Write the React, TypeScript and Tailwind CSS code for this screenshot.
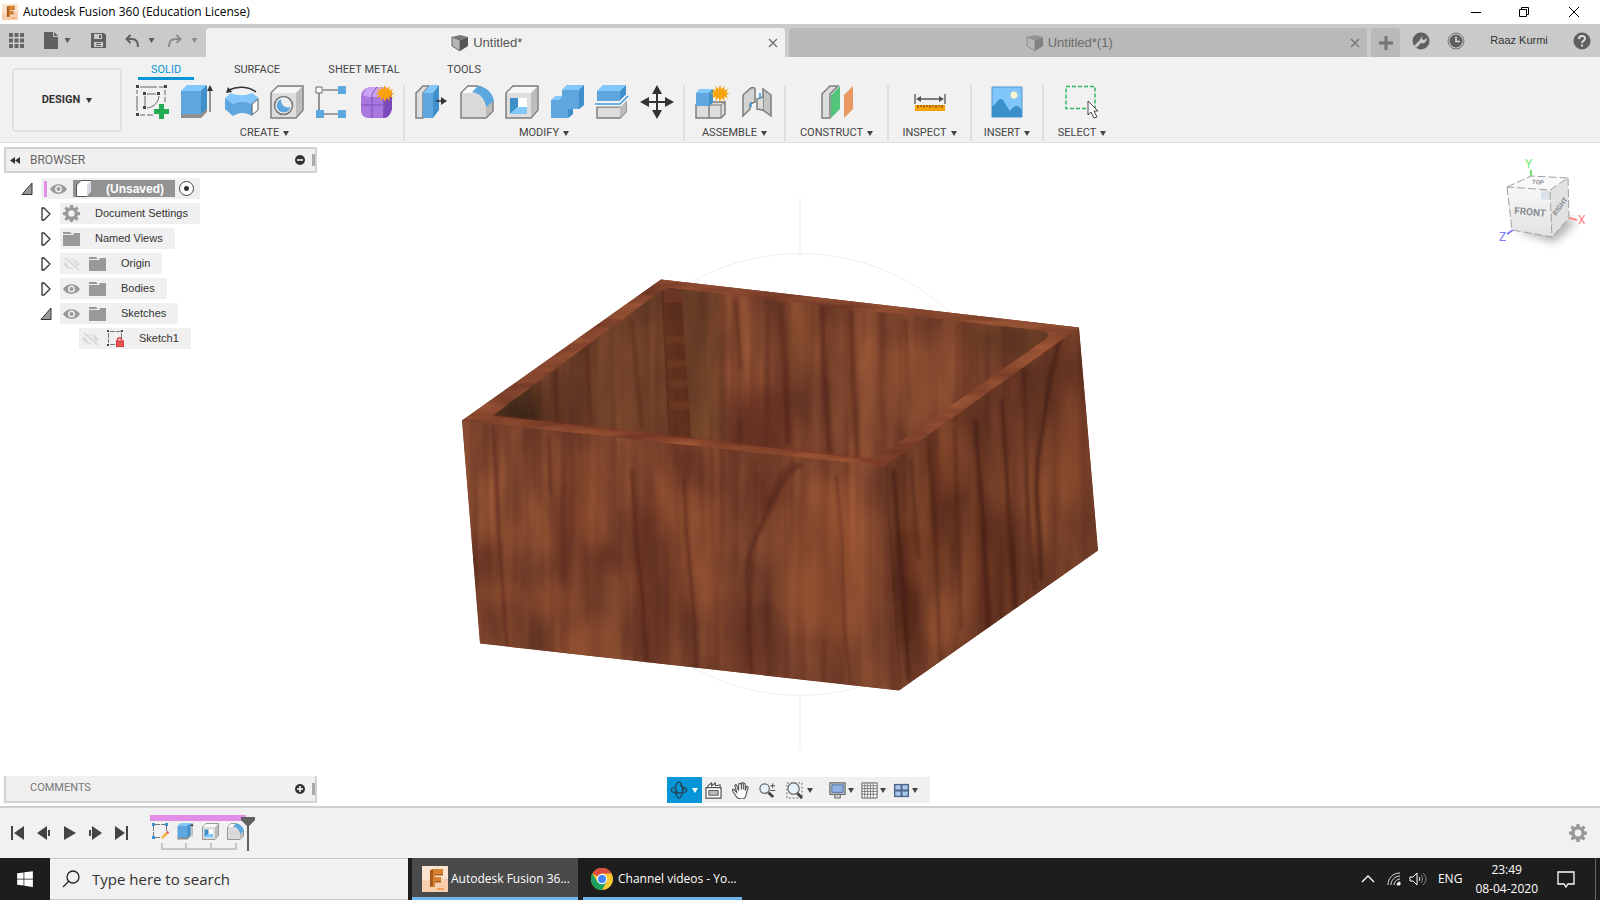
import React from "react";
import { FaWindows } from "react-icons/fa";

const Caret = ({ className = "w-[6px] h-[5px]" }: { className?: string }) => (
  <svg viewBox="0 0 6 5" className={className} fill="currentColor" aria-hidden="true">
    <path d="M0 0h6L3 5z" />
  </svg>
);

const FusionLogo = ({ className }: { className: string }) => (
  <svg viewBox="0 0 26 26" className={className} aria-hidden="true">
    <rect width="26" height="26" fill="#fbe3cf" />
    <path d="M0 14c8 2 16-3 26-1v13H0z" fill="#f8cfae" />
    <path d="M8 4.500 11 3h10v5h-8v3h6v4h-6v6H8z" fill="#d9822f" />
    <path d="M8 4.500 11 3v17l-3 1z" fill="#a65a1c" />
    <path d="M13 8h8v1.500h-8zM13 15h6v1.500h-6z" fill="#a8601f" />
    <path d="M15 22h7v2h-7z" fill="#f0a05c" />
  </svg>
);

const Cube = ({ faded = false }: { faded?: boolean }) => (
  <svg viewBox="0 0 18 18" className="w-[18px] h-[18px]" opacity={faded ? 0.55 : 1} aria-hidden="true">
    <path d="M1 3 9 1l8 2-8 3z" fill="#777" />
    <path d="M1 3l8 3v11l-8-5z" fill="#b4b4b4" stroke="#666" />
    <path d="M17 3 9 6v11l8-5z" fill="#555" />
  </svg>
);

const CloseIcon = () => (
  <svg viewBox="0 0 10 10" className="w-[10px] h-[10px]" stroke="currentColor" strokeWidth="1.500" aria-hidden="true">
    <path d="M1 1l8 8M9 1 1 9" />
  </svg>
);

const Gear = ({ className = "w-[18px] h-[18px]" }: { className?: string }) => (
  <svg viewBox="0 0 18 18" className={className} fill="#999" aria-hidden="true">
    <path
      fillRule="evenodd"
      d="M7.500 0h3l.4 2.600 1.400.6 2.200-1.600 2 2-1.600 2.200.6 1.400 2.500.4v3l-2.500.4-.6 1.400 1.600 2.200-2 2-2.200-1.600-1.400.6-.4 2.400h-3l-.4-2.400-1.400-.6-2.200 1.600-2-2 1.600-2.200-.6-1.400L0 10.600v-3l2.500-.4.6-1.400-1.600-2.200 2-2 2.200 1.600 1.400-.6zM9 5.600a3.400 3.400 0 1 0 0 6.800 3.400 3.400 0 0 0 0-6.800z"
    />
  </svg>
);

const Star = () => (
  <path
    d="M25 0l1.600 4.200L29.500 1l-.3 4.400L33 4l-1.800 3.400L35 8.500l-3.800 1.300L33 13l-3.800-1.400.3 4.400-2.900-3.200L25 17l-1.600-4.200L20.500 16l.3-4.400L17 13l1.800-3.200L15 8.500l3.800-1.100L17 4l3.800 1.400L20.500 1l2.900 3.200z"
    fill="#f9a30a"
  />
);

const gray = "#7d7d7d";

const icons: Record<string, React.ReactNode> = {
  sketch: (
    <>
      <path d="M2 5v4M2 11v15M5 2h17M24 2h5M30 5v5M30 12v5M5 30h5M12 30h6" stroke="#666" />
      <path d="M10 11v10M12 9h9M12 23c7-1 11-5 12-12" stroke="#666" fill="none" />
      <path d="M1 0h3v3H1zM29 0h3v3h-3zM1 28h3v3H1zM8 7h3v3H8zM22 7h3v3h-3zM8 21h3v3H8z" fill="#444" />
      <path d="M24 19h5v5h5v5h-5v5h-5v-5h-5v-5h5z" fill="#22ab4f" />
    </>
  ),
  extrude: (
    <>
      <path d="M1 27h20l6-5v5l-6 6H1z" fill="#8f8f8f" />
      <path d="M1 6v23h20l6-6V1z" fill="#5ea6dd" />
      <path d="M1 6 7 0h20l-6 6z" fill="#83c8fb" />
      <path d="M21 6l6-6v23l-6 6z" fill="#3f8fcb" />
      <path d="M30 4v23" stroke="#333" />
      <path d="M27 6l3-6 3 6z" fill="#333" />
    </>
  ),
  revolve: (
    <>
      <path d="M4 5c8-4 19-4 27 2" fill="none" stroke="#333" strokeWidth="1.500" />
      <path d="M1 8l2-6 4 5z" fill="#333" />
      <path d="M0 13l6-5c7 3 14 3 21 0l7 5-7 6c-5-3-13-3-19 0z" fill="#83c8fb" />
      <path d="M0 13l8 6c6-3 13-3 19 0v12c-6-4-13-4-19 0l-8-7z" fill="#5ea6dd" />
      <path d="M27 19l6-5v11l-6 5z" fill="#fff" stroke="#555" />
    </>
  ),
  hole: (
    <>
      <path d="M1 8 8 1h25v24l-7 8H1z" fill="#ddd" stroke={gray} strokeWidth="1.500" />
      <path d="M2 8 8 2h24l-6 6z" fill="#f6f6f6" />
      <path d="M26 8l6-6v23l-6 7z" fill="#bcbcbc" />
      <circle cx="13.500" cy="20.500" r="9" fill="#eee" stroke="#777" strokeWidth="1.500" />
      <path d="M11 14a7 7 0 1 0 9.500 8c-6 2-10-3-9.500-8z" fill="#5ea6dd" />
    </>
  ),
  pattern: (
    <>
      <path d="M4 8v18M8 5h16M8 29h16" stroke="#555" strokeWidth="1.200" />
      <path d="M1 2h6v6H1z" fill="#fff" stroke="#666" />
      <path d="M23 1h8v8h-8zM1 25h8v8H1zM23 25h8v8h-8z" fill="#5ba8e0" />
    </>
  ),
  form: (
    <>
      <path d="M1 12c0-6 4-9 9-10h14c6 2 8 6 8 12v9c-1 6-4 10-9 10H9c-5 0-8-3-8-8z" fill="#a877e0" />
      <path d="M3 10C5 4 8 2 12 2h12c4 1 5 3 6 5l-5 5H8z" fill="#c9a4f6" />
      <path d="M24 13l8-6v17c-2 6-4 9-9 9z" fill="#7c49bd" />
      <path d="M12 9v24M1 20h23l8-5M24 12v20M12 9l5-7" stroke="#7d51b5" fill="none" />
      <Star />
    </>
  ),
  press: (
    <>
      <path d="M1 8 8 1h6L8 8v25H1z" fill="#ddd" stroke={gray} strokeWidth="1.500" />
      <path d="M8 8l7-8h9l-6 8z" fill="#83c8fb" />
      <path d="M8 8h10v25H8z" fill="#5ea6dd" />
      <path d="M18 8l6-8v25l-6 8z" fill="#3f8fcb" />
      <path d="M21 16h7" stroke="#333" strokeWidth="1.500" />
      <path d="M26 12l6 4-6 4z" fill="#333" />
    </>
  ),
  fillet: (
    <>
      <path d="M1 8 8 1h9c10 2 16 10 16 17v8l-7 7H1z" fill="#dadada" stroke={gray} strokeWidth="1.500" />
      <path d="M2 8l6-6h9l-5 6z" fill="#fafafa" />
      <path d="M26 22l6-5v8l-6 7z" fill="#bbb" />
      <path d="M12 7l6-6c9 1 15 8 16 15l-8 6C25 14 20 8 12 7z" fill="#5ba8e0" />
    </>
  ),
  shell: (
    <>
      <path d="M1 8 8 1h25v24l-7 8H1z" fill="#ddd" stroke={gray} strokeWidth="1.500" />
      <path d="M2 8 8 2h24l-6 6z" fill="#f8f8f8" />
      <path d="M26 8l6-6v23l-6 7z" fill="#bcbcbc" />
      <path d="M5 13h17v16H5z" fill="#fff" />
      <path d="M5 13h8v9l-8 7z" fill="#3d8fca" />
      <path d="M5 29l8-7h9v7z" fill="#83c8fb" />
    </>
  ),
  combine: (
    <>
      <path d="M1 15l5-4h6V5l5-5h17v20l-5 4h-6v5l-5 4H1z" fill="#5ea6dd" />
      <path d="M1 15l5-4h6V5l5-5h17l-5 5H12v7l-3 3z" fill="#83c8fb" />
      <path d="M29 5l5-5v20l-5 4zM18 24h5v5l-5 4z" fill="#3f8fcb" />
    </>
  ),
  split: (
    <>
      <path d="M2 6l6-6h23l-6 6z" fill="#83c8fb" />
      <path d="M2 6h23v10H2z" fill="#5ea6dd" />
      <path d="M25 6l6-6v10l-6 6z" fill="#3f8fcb" />
      <path d="M2 22h23l6-5v10l-6 6H2z" fill="#ddd" stroke={gray} strokeWidth="1.500" />
      <path d="M25 22l6-5v10l-6 6z" fill="#bbb" />
      <path d="M0 19h25l8-8" stroke="#f4f4f4" strokeWidth="5" fill="none" />
      <path d="M0 19h25l8-8" stroke="#3c9ae0" strokeWidth="1.500" fill="none" />
    </>
  ),
  move: (
    <>
      <path d="M17 5v24M5 17h24" stroke="#333" strokeWidth="2" />
      <path d="M17 0l5 9H12zM17 34l5-9H12zM0 17l9-5v10zM34 17l-9-5v10z" fill="#333" />
    </>
  ),
  component: (
    <>
      <path d="M1 20h13v13H1zM14 20l4-3h12v12l-4 4H14z" fill="#ddd" stroke={gray} strokeWidth="1.500" />
      <path d="M14 20h12v13M26 20l4-3" fill="none" stroke={gray} />
      <path d="M1 8l4-4h13v13l-4 4H1z" fill="#5ea6dd" />
      <path d="M1 8l4-4h13l-4 4z" fill="#83c8fb" />
      <path d="M14 8l4-4v13l-4 4z" fill="#3f8fcb" />
      <Star />
    </>
  ),
  joint: (
    <>
      <path d="M3 10 11 3c2-1 4 0 4 1v13l-5 2v5l-7 7z" fill="#d4d4d4" stroke={gray} strokeWidth="1.500" />
      <path d="M31 31l-8-6V11l0-7 8 6z" fill="#c4c4c4" stroke={gray} strokeWidth="1.500" />
      <path d="M23 12l-6 2v10l6 1" fill="#ddd" stroke={gray} strokeWidth="1.500" />
      <path d="M11 17v5M20 8v5" stroke="#3c9ae0" strokeWidth="1.500" />
    </>
  ),
  construct: (
    <>
      <path d="M2 9l8-8h8l-8 8v24H2z" fill="#ddd" stroke={gray} strokeWidth="1.500" />
      <path d="M11 10l9-9v23l-9 9z" fill="#55c47b" />
      <path d="M24 10l9-9v23l-9 9z" fill="#e89860" />
    </>
  ),
  inspect: (
    <>
      <path d="M2 9v10M32 9v10M5 14h24" stroke="#555" strokeWidth="1.300" />
      <path d="M3 14l5-3v6zM31 14l-5-3v6z" fill="#555" />
      <path d="M2 20h30v6H2z" fill="#f9a30a" />
      <path d="M5 20v3M8 20v2M11 20v3M14 20v2M17 20v3M20 20v2M23 20v3M26 20v2M29 20v3" stroke="#5d4310" />
    </>
  ),
  insert: (
    <>
      <path d="M2 2h30v30H2z" fill="#80c6fa" stroke="#4e96cc" />
      <circle cx="24" cy="10" r="3.500" fill="#fdf7cf" />
      <path d="M2 22c4-3 6-8 9-8s6 9 9 12c3-4 5-5 7-5s3 2 5 4v7H2z" fill="#3b8fca" />
    </>
  ),
  select: (
    <>
      <path d="M1 1.500h29v22H1z" fill="none" stroke="#2fb860" strokeWidth="1.500" strokeDasharray="4 2" />
      <path d="M23 16v14l3-3 3 6 3-1-3-6h4z" fill="#fff" stroke="#444" />
    </>
  ),
};

const ToolIcon = ({ name, className = "w-[34px] h-[34px]" }: { name: string; className?: string }) => (
  <svg viewBox="0 0 34 34" className={className} fill="none" aria-hidden="true">
    {icons[name]}
  </svg>
);

const groups = [
  { label: "CREATE", width: "w-[275px] pr-1", tools: ["sketch", "extrude", "revolve", "hole", "pattern", "form"] },
  { label: "MODIFY", width: "w-[280px]", tools: ["press", "fillet", "shell", "combine", "split", "move"] },
  { label: "ASSEMBLE", width: "w-[101px]", tools: ["component", "joint"] },
  { label: "CONSTRUCT", width: "w-[103px]", tools: ["construct"] },
  { label: "INSPECT", width: "w-[83px]", tools: ["inspect"] },
  { label: "INSERT", width: "w-[72px]", tools: ["insert"] },
  { label: "SELECT", width: "w-[76px]", tools: ["select"] },
];

const ribbonTabs = [
  { label: "SOLID", width: "w-[56px]", active: true },
  { label: "SURFACE", width: "w-[56px]" },
  { label: "SHEET METAL", width: "w-[88px]" },
  { label: "TOOLS", width: "w-[42px]" },
];

const TitleBar = () => (
  <header className="flex h-6 shrink-0 items-center justify-between bg-white pl-[2px] font-['Open_Sans','Noto_Sans',sans-serif] text-black">
    <div className="flex items-center gap-[5px]">
      <FusionLogo className="w-4 h-4" />
      <h1 className="text-[12px]">Autodesk Fusion 360 (Education License)</h1>
    </div>
    <div className="flex items-center">
      <button aria-label="Minimize" className="flex w-[48px] justify-center">
        <svg viewBox="0 0 12 12" className="w-3 h-3" stroke="#000"><path d="M1 6.500h10" /></svg>
      </button>
      <button aria-label="Restore" className="flex w-[48px] justify-center">
        <svg viewBox="0 0 12 12" className="w-3 h-3" stroke="#000" fill="none">
          <path d="M1.500 3.500h7v7h-7zM3.500 3V1.500h7v7H9" />
        </svg>
      </button>
      <button aria-label="Close" className="flex w-[52px] justify-center">
        <svg viewBox="0 0 12 12" className="w-3 h-3" stroke="#000"><path d="M1 1l10 10M11 1 1 11" /></svg>
      </button>
    </div>
  </header>
);

const DocumentBar = () => (
  <div className="flex h-[33px] shrink-0 items-end bg-[#cacaca] text-[#5a5a5a]">
    <div className="flex h-[33px] w-[206px] items-center pl-[9px]">
      <button aria-label="Data panel">
        <svg viewBox="0 0 15 15" className="w-[15px] h-[15px]" fill="#666">
          <path d="M0 0h4v4H0zM5.500 0h4v4h-4zM11 0h4v4h-4zM0 5.500h4v4H0zM5.500 5.500h4v4h-4zM11 5.500h4v4h-4zM0 11h4v4H0zM5.500 11h4v4h-4zM11 11h4v4h-4z" />
        </svg>
      </button>
      <button aria-label="File" className="ml-5 flex items-center gap-[6px]">
        <svg viewBox="0 0 14 17" className="w-[14px] h-[17px]" fill="#606060">
          <path d="M0 0h9v5h5v12H0zM10 0l4 4h-4z" />
        </svg>
        <Caret className="w-[7px] h-[5px]" />
      </button>
      <button aria-label="Save" className="ml-5">
        <svg viewBox="0 0 15 15" className="w-[15px] h-[15px]">
          <path d="M0 0h13l2 2v13H0z" fill="#606060" />
          <path d="M3 1h8v5H3zM3 9h9v5H3z" fill="#cacaca" />
          <path d="M8 2h2v3H8zM5 10h5v1H5zM5 12h5v1H5z" fill="#606060" />
        </svg>
      </button>
      <button aria-label="Undo" className="ml-[19px] flex items-center gap-[9px]">
        <svg viewBox="0 0 14 13" className="w-[14px] h-[13px]" fill="none" stroke="#606060" strokeWidth="2">
          <path d="M5.500 1 1.500 5l4 4M2 5h5c4 0 6 3 6 8" />
        </svg>
        <Caret className="w-[7px] h-[5px]" />
      </button>
      <button aria-label="Redo" className="ml-[13px] flex items-center gap-[9px] text-[#8d8d8d]">
        <svg viewBox="0 0 14 13" className="w-[14px] h-[13px]" fill="none" stroke="currentColor" strokeWidth="2">
          <path d="M8.500 1l4 4-4 4M12 5H7c-4 0-6 3-6 8" />
        </svg>
        <Caret className="w-[7px] h-[5px]" />
      </button>
    </div>
    <div className="flex h-[29px] flex-1 items-center rounded-t bg-[#f1f1f1] pr-[7px]">
      <button className="flex flex-1 items-center justify-center gap-1 text-[13px] text-[#555]">
        <Cube />
        Untitled*
      </button>
      <button aria-label="Close Untitled*" className="text-[#777]"><CloseIcon /></button>
    </div>
    <div className="ml-1 flex h-[29px] flex-1 items-center rounded-t bg-[#b9b9b9] pr-[7px]">
      <button className="flex flex-1 items-center justify-center gap-1 text-[13px] text-[#6c6c6c]">
        <Cube faded />
        Untitled*(1)
      </button>
      <button aria-label="Close Untitled*(1)" className="text-[#777]"><CloseIcon /></button>
    </div>
    <button aria-label="New tab" className="ml-1 flex h-[29px] w-[29px] items-center justify-center rounded-t bg-[#b9b9b9]">
      <svg viewBox="0 0 14 14" className="w-[14px] h-[14px]" stroke="#757575" strokeWidth="3"><path d="M7 0v14M0 7h14" /></svg>
    </button>
    <div className="flex h-[33px] w-[200px] items-center justify-between pl-3 pr-[9px]">
      <button aria-label="Extensions">
        <svg viewBox="0 0 18 18" className="w-[18px] h-[18px]">
          <circle cx="9" cy="9" r="8.500" fill="#5f5f5f" />
          <path d="M3 15l6-6" stroke="#cacaca" strokeWidth="3" />
          <path d="M13 4l-3 1 0 2 2 1 3-2c0 4-3 6-6 5-2-2-1-7 4-7z" fill="#cacaca" />
        </svg>
      </button>
      <button aria-label="Job status">
        <svg viewBox="0 0 18 18" className="w-[18px] h-[18px]" fill="none">
          <circle cx="9" cy="9" r="8" stroke="#777" />
          <circle cx="9" cy="9" r="6.500" fill="#5f5f5f" />
          <path d="M9 4.500V9.500h4" stroke="#ddd" strokeWidth="1.500" />
        </svg>
      </button>
      <button className="mx-2 text-[11px] text-[#333]">Raaz Kurmi</button>
      <button aria-label="Help">
        <svg viewBox="0 0 18 18" className="w-[18px] h-[18px]" fill="none">
          <circle cx="9" cy="9" r="8.500" fill="#5f5f5f" />
          <path d="M6 7c0-4 6-4 6-.5 0 2.500-3 2-3 4.500" stroke="#ddd" strokeWidth="2" />
          <path d="M8 12.500h2v2H8z" fill="#ddd" />
        </svg>
      </button>
    </div>
  </div>
);

const Ribbon = () => (
  <div className="flex h-[86px] shrink-0 border-b border-[#dcdcdc] bg-[#f1f1f1] font-[Roboto,'Liberation_Sans',sans-serif] text-[11px] text-[#444]">
    <div className="w-[130px] shrink-0 pl-3 pt-[11px]">
      <button className="flex h-[64px] w-[110px] items-center justify-center gap-[6px] rounded border-2 border-[#e0e0e0] font-bold text-[#333]">
        DESIGN
        <Caret />
      </button>
    </div>
    <div className="flex flex-col">
      <nav className="flex h-[23px] gap-[35px] pl-2">
        {ribbonTabs.map((tab) => (
          <button
            key={tab.label}
            className={
              tab.active
                ? `${tab.width} h-[23px] border-b-[3px] border-[#0696d7] pt-[6px] leading-[14px] text-[#0696d7]`
                : `${tab.width} h-[23px] border-b-[3px] border-transparent pt-[6px] leading-[14px]`
            }
          >
            {tab.label}
          </button>
        ))}
      </nav>
      <div className="mt-[5px] flex h-[56px]">
        {groups.map((group) => (
          <section
            key={group.label}
            className={`${group.width} flex flex-col items-center justify-between border-r-2 border-[#dfdfdf] last:border-r-0`}
          >
            <div className="flex gap-[11px]">
              {group.tools.map((tool) => (
                <button key={tool} aria-label={tool}><ToolIcon name={tool} /></button>
              ))}
            </div>
            <button className="flex items-center gap-1 leading-4">
              {group.label}
              <Caret />
            </button>
          </section>
        ))}
      </div>
    </div>
  </div>
);

const Eye = ({ hidden = false }: { hidden?: boolean }) => (
  <svg viewBox="0 0 17 14" className="w-[17px] h-[14px]" fill="none" aria-hidden="true">
    <path d="M0 7c4-6.500 13-6.500 17 0-4 6.500-13 6.500-17 0z" fill={hidden ? "#dcdcdc" : "#999"} />
    <circle cx="8.500" cy="7" r="3.500" fill="#f0f0f0" />
    <circle cx="8.500" cy="7" r="2" fill={hidden ? "#dcdcdc" : "#999"} />
    {hidden && <path d="M1 1l14 12" stroke="#f0f0f0" strokeWidth="4" />}
    {hidden && <path d="M2 1l14 12" stroke="#d4d4d4" strokeWidth="1.500" />}
  </svg>
);

const Folder = () => (
  <svg viewBox="0 0 17 14" className="w-[17px] h-[14px]" fill="#999" aria-hidden="true">
    <path d="M0 0h7l2 2H0zM0 3h10l1-2h6v13H0z" />
  </svg>
);

const SketchLock = () => (
  <svg viewBox="0 0 17 17" className="w-[17px] h-[17px]" fill="none" aria-hidden="true">
    <path d="M1.500 3v10M3 1.500h11M14.500 3v6M3 14.500h6" stroke="#777" strokeDasharray="5 1" />
    <path d="M0 0h2v2H0zM14 0h2v2h-2zM0 14h2v2H0z" fill="#444" />
    <path d="M10.500 11V9.500c0-2 4-2 4 0V11" stroke="#d93a3a" strokeWidth="1.500" />
    <path d="M9 10.500h8V17H9z" fill="#d93a3a" />
    <path d="M10 13h6M10 15h6" stroke="#f7a0a0" strokeWidth=".6" />
  </svg>
);

const Expander = ({ open }: { open: boolean }) => (
  <button aria-label={open ? "Collapse" : "Expand"} className="flex w-3 justify-center">
    <svg viewBox="0 0 12 14" className="w-[12px] h-[14px]" stroke="#333" strokeLinejoin="round">
      {open ? <path d="M11 1v11.500H1z" fill="#999" /> : <path d="M2 1h2l6 6-6 6H2z" fill="#fafafa" strokeWidth="1.300" />}
    </svg>
  </button>
);

const treeRows = [
  { label: "Document Settings", open: false, icon: "gear" },
  { label: "Named Views", open: false, icon: "folder" },
  { label: "Origin", open: false, icon: "folder", eye: "off" },
  { label: "Bodies", open: false, icon: "folder", eye: "on" },
  { label: "Sketches", open: true, icon: "folder", eye: "on" },
];

const PanelGrip = () => <span className="ml-[7px] h-3 w-[3px] border-l-2 border-r border-[#aaa]" />;

const Browser = () => (
  <aside className="relative w-[320px] pl-1 pt-1 text-[11px] text-[#333]">
    <div className="flex h-[26px] w-[313px] items-center border-2 border-[#d2d2d2] bg-[#f0f0f0] pl-1">
      <button aria-label="Collapse browser">
        <svg viewBox="0 0 10 7" className="w-[10px] h-[7px]" fill="#333"><path d="M5 0v7L0 3.500zM10 0v7L5 3.500z" /></svg>
      </button>
      <h2 className="ml-[10px] flex-1 font-[Roboto,'Liberation_Sans',sans-serif] text-[12px] text-[#666]">BROWSER</h2>
      <button aria-label="Hide browser">
        <svg viewBox="0 0 10 10" className="w-[10px] h-[10px]"><circle cx="5" cy="5" r="5" fill="#333" /><path d="M2 5h6" stroke="#fff" strokeWidth="1.500" /></svg>
      </button>
      <PanelGrip />
    </div>
    <ul className="mt-[5px] flex flex-col gap-1">
      <li className="flex h-[21px] items-center gap-2 pl-[17px]">
        <Expander open />
        <div className="flex h-[21px] w-[159px] items-center bg-[#f0f0f0] pl-[3px]">
          <span className="h-4 w-[3px] bg-[#e08ee6]" />
          <button aria-label="Toggle root" className="ml-[3px]"><Eye /></button>
          <button className="ml-[6px] flex h-[17px] w-[102px] items-center bg-[#939393] pl-[3px] text-[12px] font-bold text-white">
            <svg viewBox="0 0 16 17" className="w-4 h-[17px]" stroke="#555">
              <path d="M.5 5 5 .5h10.500v11L11 16.500H.5z" fill="#fff" />
              <path d="M11 5l4.500-4.500v11L11 16.500z" fill="#d5d9df" stroke="none" />
            </svg>
            <span className="ml-[14px]">(Unsaved)</span>
          </button>
          <input type="radio" defaultChecked aria-label="Activate component" className="ml-1 h-[15px] w-[15px] appearance-none rounded-full border border-[#444] bg-[radial-gradient(circle,#333_0_2px,#fff_3px)]" />
        </div>
      </li>
      {treeRows.map((row) => (
        <li key={row.label} className="flex h-[21px] items-center gap-2 pl-9">
          <Expander open={row.open} />
          <div className="flex h-[21px] items-center bg-[#f0f0f0] pl-[3px] pr-3">
            {row.eye && <button aria-label={`Toggle ${row.label}`} className="mr-[9px]"><Eye hidden={row.eye === "off"} /></button>}
            {row.icon === "gear" ? <Gear className="w-[17px] h-[17px]" /> : <Folder />}
            <span className="ml-[15px]">{row.label}</span>
          </div>
        </li>
      ))}
      <li className="flex h-[21px] items-center pl-[75px]">
        <div className="flex h-[21px] items-center bg-[#f0f0f0] pl-[3px] pr-3">
          <button aria-label="Toggle Sketch1" className="mr-2"><Eye hidden /></button>
          <SketchLock />
          <span className="ml-[15px]">Sketch1</span>
        </div>
      </li>
    </ul>
  </aside>
);

const FRONT = "462,421 884,467 899,691 480,644";
const SIDE = "884,467 1079,328 1098,551 899,691";
const RIM = "661,280 1079,328 884,467 462,421";

const WoodBox = () => (
  <svg
    viewBox="0 143 1600 664"
    preserveAspectRatio="xMidYMid slice"
    className="absolute inset-0 h-full w-full"
    role="img"
    aria-label="Wooden box model"
  >
    <defs>
      <filter id="wood" x="0" y="0" width="1" height="1" colorInterpolationFilters="sRGB">
        <feTurbulence type="fractalNoise" baseFrequency="0.025 0.009" numOctaves="3" seed="8" result="n" />
        <feColorMatrix in="n" values=".32 0 0 0 .335  .2 0 0 0 .175  .1 0 0 0 .13  0 0 0 0 1" result="base" />
        <feTurbulence type="fractalNoise" baseFrequency="0.1 0.004" numOctaves="2" seed="21" />
        <feColorMatrix values="0 0 0 0 .32  0 0 0 0 .14  0 0 0 0 .1  .9 0 0 0 -.34" result="grain" />
        <feMerge result="m">
          <feMergeNode in="base" />
          <feMergeNode in="grain" />
        </feMerge>
        <feComposite in="m" in2="SourceGraphic" operator="in" />
      </filter>
      <filter id="rimWood" x="0" y="0" width="1" height="1" colorInterpolationFilters="sRGB">
        <feTurbulence type="fractalNoise" baseFrequency="0.015 0.1" numOctaves="2" seed="4" />
        <feColorMatrix values=".32 0 0 0 .37  .22 0 0 0 .17  .12 0 0 0 .12  0 0 0 0 1" />
        <feComposite in2="SourceGraphic" operator="in" />
      </filter>
      <filter id="soft" x="-50%" y="-20%" width="200%" height="140%">
        <feGaussianBlur stdDeviation="2" />
      </filter>
      <filter id="softer" x="-100%" y="-50%" width="300%" height="200%">
        <feGaussianBlur stdDeviation="9" />
      </filter>
      <filter id="line" x="400" y="200" width="800" height="560" filterUnits="userSpaceOnUse">
        <feGaussianBlur stdDeviation="1.500" />
      </filter>
      <clipPath id="frontClip"><polygon points={FRONT} /></clipPath>
      <clipPath id="sideClip"><polygon points={SIDE} /></clipPath>
      <clipPath id="innerClip">
        <path d="M493 416 660 292Q666 288 674 289L1040 331Q1052 333 1046 339L878 458 862 459z" />
      </clipPath>
    </defs>

    <g fill="none" stroke="#efefef">
      <circle cx="800" cy="475" r="221" />
      <path d="M800 198v56M800 696v55" />
    </g>

    <path d="M661 280 1079 328 1098 551 899 691 480 644 462 421z" fill="#7a3f28" />
    <polygon points={RIM} fill="#8a4a30" filter="url(#rimWood)" />

    <g clipPath="url(#innerClip)">
      <rect x="480" y="280" width="600" height="190" fill="#7a432c" filter="url(#wood)" />
      <path d="M480 280h183l9 190H480z" fill="#40301a" opacity=".22" />
      <path d="M661 285h20l12 180h-23z" fill="#4a2414" opacity=".5" />
      <path d="M663 287h19l1 16h-19z" fill="#6e3824" opacity=".8" />
      <path d="M666 340h20M668 364h20M670 384h20M671 406h22" stroke="#7f4526" strokeWidth="8" opacity=".4" filter="url(#line)" />
      <path d="M681 285h24l8 180h-20z" fill="#5c4426" opacity=".3" />
      <path d="M703 285h16l8 180h-14z" fill="#5c4426" opacity=".2" filter="url(#soft)" />
      <path d="M485 425l40-50 24 74z" fill="#1e1408" opacity=".6" filter="url(#softer)" />
      <g stroke="#4a1f17" fill="none" opacity=".45" filter="url(#line)">
        <path d="M780 305l5 60 3 80M822 308l2 60 6 90M851 310l2 60 4 90M554 365l4 60" strokeWidth="5" />
        <path d="M735 300l6 70M905 320l5 90M740 420v40M632 320l10 110M586 345l6 80" strokeWidth="3" />
      </g>
      <ellipse cx="765" cy="425" rx="24" ry="38" fill="#4d1f18" opacity=".5" filter="url(#softer)" />
      <ellipse cx="915" cy="385" rx="34" ry="45" fill="#a8623a" opacity=".4" filter="url(#softer)" />
      <ellipse cx="800" cy="340" rx="12" ry="45" fill="#9a5a30" opacity=".4" filter="url(#softer)" />
      <ellipse cx="1015" cy="340" rx="50" ry="16" fill="#4d331a" opacity=".5" filter="url(#softer)" />
    </g>
    <path d="M493 417 862 459 884 467" fill="none" stroke="#7a3522" strokeWidth="3" opacity=".6" filter="url(#line)" />

    <g clipPath="url(#frontClip)">
      <polygon points={FRONT} fill="#7a432c" filter="url(#wood)" />
      <g fill="#471b15" opacity=".4" filter="url(#softer)">
        <ellipse cx="567" cy="520" rx="14" ry="50" />
        <ellipse cx="485" cy="560" rx="14" ry="14" />
        <ellipse cx="655" cy="590" rx="18" ry="90" />
        <ellipse cx="690" cy="470" rx="16" ry="26" />
        <ellipse cx="610" cy="560" rx="20" ry="14" />
        <ellipse cx="765" cy="495" rx="10" ry="30" />
        <ellipse cx="745" cy="650" rx="18" ry="50" />
      </g>
      <g fill="#a65c34" opacity=".42" filter="url(#softer)">
        <ellipse cx="593" cy="500" rx="12" ry="50" />
        <ellipse cx="550" cy="600" rx="28" ry="22" />
        <ellipse cx="585" cy="645" rx="26" ry="24" />
        <ellipse cx="830" cy="560" rx="44" ry="80" />
        <ellipse cx="700" cy="560" rx="14" ry="60" />
        <ellipse cx="495" cy="595" rx="26" ry="12" />
        <ellipse cx="510" cy="535" rx="14" ry="12" />
        <ellipse cx="665" cy="500" rx="8" ry="36" />
      </g>
      <g stroke="#3f1813" fill="none" opacity=".42" filter="url(#line)">
        <path d="M802 464c-18 10-28 32-38 56-10 22-18 36-17 62 2 30 0 60 6 100" strokeWidth="4" />
        <path d="M796 464c-12 8-20 26-28 46" strokeWidth="9" opacity=".6" />
        <path d="M632 470l4 70 7 60 4 70M684 480l3 60 6 60 4 80M493 425l6 110 8 115" strokeWidth="3" />
        <path d="M836 475l6 60 2 90 8 70M548 435l3 60M752 560l-2 60" strokeWidth="3" opacity=".8" />
      </g>
    </g>

    <g clipPath="url(#sideClip)">
      <polygon points={SIDE} fill="#7a432c" filter="url(#wood)" />
      <polygon points={SIDE} fill="#3a1a0c" opacity=".16" />
      <g fill="#3c1510" opacity=".45" filter="url(#softer)">
        <ellipse cx="940" cy="505" rx="9" ry="55" />
        <ellipse cx="902" cy="580" rx="8" ry="60" />
        <ellipse cx="990" cy="570" rx="12" ry="70" />
      </g>
      <g fill="#a65c34" opacity=".42" filter="url(#softer)">
        <ellipse cx="920" cy="570" rx="10" ry="24" />
        <ellipse cx="955" cy="460" rx="10" ry="36" />
        <ellipse cx="940" cy="620" rx="14" ry="30" />
        <ellipse cx="1070" cy="450" rx="14" ry="70" />
      </g>
      <g stroke="#34120e" fill="none" opacity=".48" filter="url(#line)">
        <path d="M1060 340c-6 20-12 46-16 80-2 20-9 40-7 80 2 30 4 40 4 80" strokeWidth="4" />
        <path d="M975 420l8 100 6 110M1002 400l6 100 8 110M893 470l10 120 6 90" strokeWidth="4" />
        <path d="M928 440l8 100 4 120M955 430l6 200M1024 370l2 110 8 110M911 460l8 100" strokeWidth="2" />
      </g>
    </g>
  </svg>
);

const ViewCube = () => (
  <svg viewBox="1490 150 110 104" className="absolute right-0 top-2 h-[104px] w-[110px]" role="img" aria-label="View cube">
    <defs>
      <filter id="cubeShadow" x="-40%" y="-40%" width="180%" height="180%"><feGaussianBlur stdDeviation="4" /></filter>
      <linearGradient id="cubeFace" x1="0" y1="0" x2="0" y2="1">
        <stop offset="0" stopColor="#f7f7f7" />
        <stop offset="1" stopColor="#e2e2e2" />
      </linearGradient>
    </defs>
    <path d="M1518 230l36 12 22-20-20-12z" fill="#999" opacity=".7" filter="url(#cubeShadow)" />
    <path d="M1531 175v-6" stroke="#6fee6f" strokeWidth="2" />
    <path d="M1569 217l8 2" stroke="#ff8a8a" strokeWidth="2" />
    <path d="M1513 229l-6 4" stroke="#7b7bff" strokeWidth="2" />
    <path d="M1507 186l24-11 37 2-18 12z" fill="#f8f8f8" />
    <path d="M1507 186l43 3 2 47-40-7z" fill="url(#cubeFace)" />
    <path d="M1550 189l18-12 1 40-17 19z" fill="#e2e2e2" />
    <path d="M1541 189l9 1v9l-9-1z" fill="#dbe1e8" />
    <path d="M1507 186l24-11 37 2-18 12zM1507 186l5 43 40 7-2-47M1568 177l1 40-17 19" fill="none" stroke="#a0a0a0" strokeDasharray="8 3" />
    <g fontFamily="Roboto, Liberation Sans, sans-serif" fontWeight="bold" fill="#8b9096">
      <text fontSize="10" transform="translate(1514 213) rotate(5)">FRONT</text>
      <text fontSize="7" transform="translate(1556 215) rotate(-54)">RIGHT</text>
      <text fontSize="6" transform="translate(1532 183) rotate(3)">TOP</text>
    </g>
    <g fontFamily="Roboto, Liberation Sans, sans-serif" fontSize="12">
      <text x="1525" y="167" fill="#6fee6f">Y</text>
      <text x="1578" y="223" fill="#ff8080">X</text>
      <text x="1499" y="240" fill="#7b7bff">Z</text>
    </g>
  </svg>
);

const navTools = [
  {
    label: "Look at",
    icon: (
      <>
        <path d="M3 6V4l4-3v3l4-3v3l5-1v3" fill="#fff" stroke="#555" strokeWidth="1.200" />
        <path d="M1 6h16v11H1z" fill="#fff" stroke="#555" strokeWidth="1.300" />
        <path d="M4 9h10v5H4z" fill="#bbb" stroke="#555" />
      </>
    ),
  },
  {
    label: "Pan",
    icon: (
      <path
        d="M5 11 2 8C1 7 0 8 1 10l4 6c1 1 2 2 5 2 4 0 5-2 5-5l2-7c0-2-2-2-2 0l-1 3V3c0-2-2-2-2 0v5-6c0-2-2-2-2 0v6-5C9 1 7 1 7 3v6L5 4C4 2 3 3 3 4z"
        fill="#fff"
        stroke="#555"
        strokeWidth="1.200"
      />
    ),
  },
  {
    label: "Zoom",
    icon: (
      <>
        <circle cx="6" cy="7" r="5" fill="#e4f2fa" stroke="#666" strokeWidth="1.300" />
        <path d="M10 11l5 5" stroke="#444" strokeWidth="3" />
        <path d="M12 4h5M14.500 1.500v5M12 9h5" stroke="#444" />
      </>
    ),
  },
  {
    label: "Fit",
    spacing: "ml-[3px] gap-1",
    icon: (
      <>
        <path d="M1 1h16v16H1z" stroke="#666" strokeDasharray="2 2" />
        <circle cx="8" cy="7" r="6" fill="#e4f2fa" stroke="#666" strokeWidth="1.300" />
        <path d="M12 12l5 5" stroke="#444" strokeWidth="3" />
      </>
    ),
  },
  {
    label: "Display settings",
    spacing: "ml-4 gap-[2px]",
    icon: (
      <>
        <path d="M1 1h16v12H1z" fill="#ddd" stroke="#666" strokeWidth="1.300" />
        <path d="M3 3h12v8H3z" fill="#8fb4e3" stroke="#4d6c9c" />
        <path d="M6 13h6v4H6z" fill="#ccc" stroke="#666" />
      </>
    ),
  },
  {
    label: "Grid and snaps",
    spacing: "ml-[7px] gap-[2px]",
    icon: (
      <>
        <path d="M1 1h16v16H1z" fill="#fff" stroke="#555" />
        <path d="M4 1v16M7 1v16M10 1v16M13 1v16M1 4h16M1 7h16M1 10h16M1 13h16" stroke="#777" />
      </>
    ),
  },
  {
    label: "Viewports",
    spacing: "ml-[7px] gap-[2px]",
    icon: (
      <>
        <path d="M1 2h16v14H1z" fill="#4f6482" />
        <path d="M2.500 3.500h5.500v4.500H2.500zM10 3.500h5.500v4.500H10zM2.500 10h5.500v4.500H2.500zM10 10h5.500v4.500H10z" fill="#a9c8f0" />
      </>
    ),
  },
];

const NavBar = () => (
  <div className="flex h-[26px] items-center bg-[#f0f0f0] pr-3 text-[#444]">
    <button aria-label="Orbit" className="flex h-[26px] w-[35px] items-center justify-center gap-1 bg-[#0696d7]">
      <svg viewBox="0 0 18 18" className="w-[18px] h-[18px]" fill="none" stroke="#24465c" strokeWidth="1.300">
        <ellipse cx="9" cy="9" rx="3.500" ry="8" />
        <path d="M13 6c6 2 5 6-4 6-9 0-10-4-4-6M10 4l4 3-1 3M5 13l3-1-2-3" />
      </svg>
      <Caret className="w-[6px] h-[5px] text-white" />
    </button>
    {navTools.map((tool) => (
      <button
        key={tool.label}
        aria-label={tool.label}
        className={tool.spacing ? `${tool.spacing} flex items-center` : "ml-[3px] mr-[7px] flex items-center"}
      >
        <svg viewBox="0 0 18 18" className="w-[17px] h-[17px]" fill="none">{tool.icon}</svg>
        {tool.spacing && <Caret />}
      </button>
    ))}
  </div>
);

const Viewport = () => (
  <main className="relative flex min-h-0 flex-1 flex-col justify-between overflow-hidden bg-white">
    <WoodBox />
    <ViewCube />
    <Browser />
    <div className="relative grid grid-cols-[1fr_auto_1fr] items-end pb-[3px] pl-1 pr-2">
      <div className="flex h-[27px] w-[313px] items-center border-2 border-t-0 border-[#d2d2d2] bg-[#f0f0f0] pl-6">
        <h2 className="flex-1 font-[Roboto,'Liberation_Sans',sans-serif] text-[11px] text-[#777]">COMMENTS</h2>
        <button aria-label="Show comments">
          <svg viewBox="0 0 10 10" className="w-[10px] h-[10px]"><circle cx="5" cy="5" r="5" fill="#333" /><path d="M2 5h6M5 2v6" stroke="#fff" strokeWidth="1.500" /></svg>
        </button>
        <PanelGrip />
      </div>
      <NavBar />
    </div>
  </main>
);

const playback = [
  { label: "Go to start", d: "M1 0h2v14H1zM14 0v14L4 7z" },
  { label: "Step back", d: "M11 0v14L1 7zM12 4h2v6h-2z" },
  { label: "Play", d: "M2 0l12 7-12 7z" },
  { label: "Step forward", d: "M4 0l10 7-10 7zM1 4h2v6H1z" },
  { label: "Go to end", d: "M12 0h2v14h-2zM1 0v14l10-7z" },
];

const Timeline = () => (
  <section className="flex h-[52px] shrink-0 items-center border-t-2 border-[#cfcfcf] bg-[#f1f1f1] pl-[10px] pr-[13px]">
    <div className="flex gap-[11px]">
      {playback.map((item) => (
        <button key={item.label} aria-label={item.label}>
          <svg viewBox="0 0 15 14" className="w-[15px] h-[14px]" fill="#444"><path d={item.d} /></svg>
        </button>
      ))}
    </div>
    <div className="relative ml-[21px] w-[104px]">
      <div className="h-[6px] w-24 bg-[#e08ee6]" />
      <div className="mt-[2px] flex gap-2 pl-[2px]">
        <button aria-label="Sketch feature">
          <svg viewBox="0 0 17 17" className="w-[17px] h-[17px]" fill="none">
            <path d="M1.500 3v11M3 1.500h11M14.500 3v6M3 14.500h6" stroke="#777" strokeDasharray="5 1" />
            <path d="M0 0h3v3H0zM13 0h3v3h-3zM0 13h3v3H0z" fill="#3c8fd0" />
            <path d="M9 16l1-3 4-4 2 2-4 4z" fill="#f7b748" />
            <path d="M14 9l2-1 1 2-1 1z" fill="#e2403a" />
          </svg>
        </button>
        <button aria-label="Extrude feature"><ToolIcon name="extrude" className="w-[17px] h-[17px]" /></button>
        <button aria-label="Shell feature"><ToolIcon name="shell" className="w-[17px] h-[17px]" /></button>
        <button aria-label="Fillet feature"><ToolIcon name="fillet" className="w-[17px] h-[17px]" /></button>
      </div>
      <svg viewBox="0 0 104 8" className="mt-[3px] h-2 w-[104px]" fill="none" stroke="#c6c6c6" strokeWidth="2">
        <path d="M12 0v6h74V0M36 0v6M61 0v6" />
      </svg>
      <svg viewBox="0 0 14 34" className="absolute left-[91px] top-[2px] h-[34px] w-[14px]" fill="#606060" aria-hidden="true">
        <path d="M0 0h14v3L8 9v25H6V9L0 3z" />
      </svg>
    </div>
    <button aria-label="Timeline settings" className="ml-auto"><Gear /></button>
  </section>
);

const Taskbar = () => (
  <footer className="flex h-[42px] shrink-0 bg-[#1d1d1d] font-['Open_Sans','Noto_Sans',sans-serif] text-[12px] text-white">
    <button aria-label="Start" className="flex w-[50px] items-center justify-center"><FaWindows className="h-[18px] w-[18px]" /></button>
    <label className="flex w-[358px] items-center gap-3 border-y border-[#c8c8c8] bg-[#f1f1f1] pl-3 text-black">
      <svg viewBox="0 0 18 18" className="w-[18px] h-[18px]" fill="none" stroke="#222" strokeWidth="1.300" aria-hidden="true">
        <circle cx="11" cy="7" r="6" />
        <path d="M7 11l-6 6" />
      </svg>
      <input type="text" aria-label="Search" placeholder="Type here to search" className="min-w-0 flex-1 bg-transparent text-[15px] outline-none placeholder:text-[#333]" />
    </label>
    <button className="ml-1 flex w-[166px] items-center gap-[3px] bg-[#4a4a4a] pl-[10px] shadow-[inset_0_-3px_0_#6cb4ee]">
      <FusionLogo className="w-[26px] h-[26px]" />
      Autodesk Fusion 36...
    </button>
    <button className="ml-[5px] flex w-[159px] items-center gap-[5px] pl-2 shadow-[inset_0_-3px_0_#6cb4ee]">
      <svg viewBox="0 0 24 24" className="w-[22px] h-[22px]" aria-hidden="true">
        <circle cx="12" cy="12" r="12" fill="#fcc934" />
        <path d="M1.600 6A12 12 0 0 1 22.400 6H12L7 9z" fill="#dd4b3e" />
        <path d="M1.600 6A12 12 0 0 0 12 24l5-9-5 2-5-2z" fill="#1aa15f" />
        <circle cx="12" cy="12" r="5.600" fill="#fff" />
        <circle cx="12" cy="12" r="4.400" fill="#4285f4" />
      </svg>
      Channel videos - Yo...
    </button>
    <div className="ml-auto flex items-center">
      <button aria-label="Hidden icons">
        <svg viewBox="0 0 14 8" className="w-[14px] h-2" fill="none" stroke="#fff" strokeWidth="1.300"><path d="M1 7l6-6 6 6" /></svg>
      </button>
      <button aria-label="Network" className="ml-3">
        <svg viewBox="0 0 14 14" className="w-[14px] h-[14px]" fill="none" stroke="#ddd">
          <path d="M1 13C1 6 6 1 13 1M4 13c0-5 4-9 9-9M7 13c0-3 3-6 6-6" />
          <path d="M10 13c0-2 1-3 3-3v3z" fill="#fff" />
        </svg>
      </button>
      <button aria-label="Volume" className="ml-2">
        <svg viewBox="0 0 18 14" className="w-[18px] h-[14px]" fill="none" stroke="#fff">
          <path d="M1 5h3l4-4v12L4 9H1z" />
          <path d="M10 5c1 1 1 3 0 4" />
          <path d="M12 3c2 2 2 6 0 8M14 1c4 4 4 8 0 12" stroke="#888" />
        </svg>
      </button>
      <button className="ml-[11px]">ENG</button>
      <button className="ml-[13px] text-center leading-[19px]">
        23:49
        <br />
        08-04-2020
      </button>
      <button aria-label="Notifications" className="ml-[19px] mr-5">
        <svg viewBox="0 0 18 17" className="w-[18px] h-[17px]" fill="none" stroke="#fff" strokeWidth="1.300">
          <path d="M1 1h16v12h-6l-2 3-2-3H1z" />
        </svg>
      </button>
      <span className="h-[42px] w-[5px] border-l border-[#666]" />
    </div>
  </footer>
);

const App = () => {
  return (
    <div className="flex h-screen flex-col overflow-hidden font-['Liberation_Sans',Arial,sans-serif]">
      <TitleBar />
      <DocumentBar />
      <Ribbon />
      <Viewport />
      <Timeline />
      <Taskbar />
    </div>
  );
};

export default App;
